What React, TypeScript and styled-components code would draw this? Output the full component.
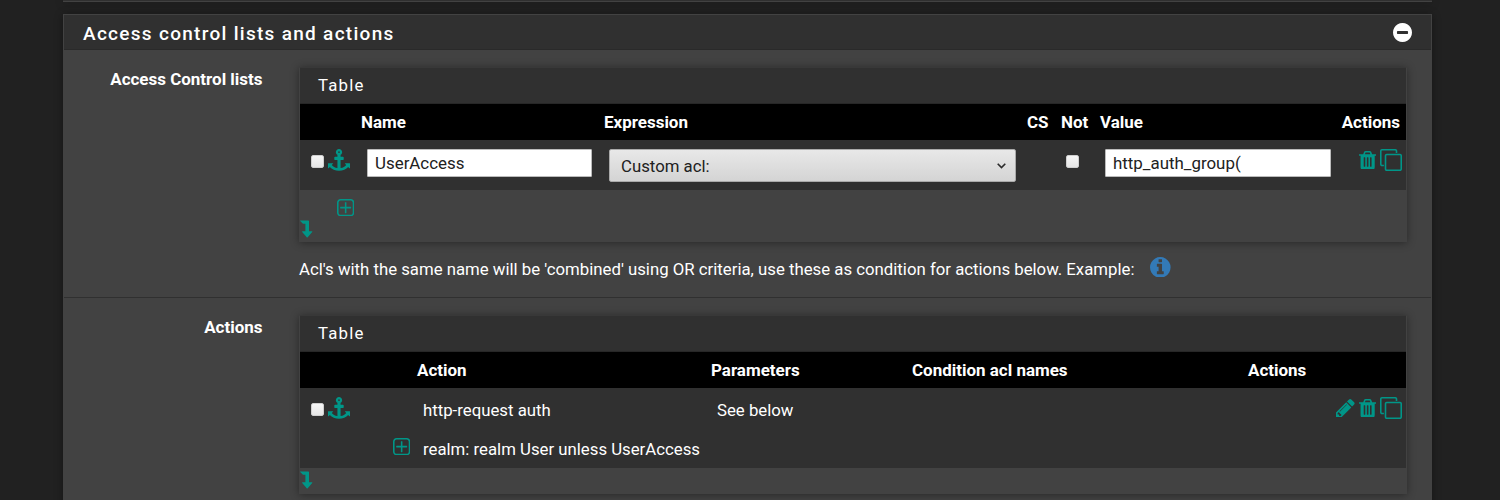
import React from "react";
import styled, { createGlobalStyle } from "styled-components";

const GlobalStyle = createGlobalStyle`
  * { box-sizing: border-box; }
  body {
    margin: 0;
    background: #212121;
    color: #fff;
    font: 400 16.78px/22px Roboto, sans-serif;
  }
`;

const Viewport = styled.div`
  width: 1500px;
  height: 500px;
  overflow: hidden;
  display: flex;
  flex-direction: column;
  align-items: center;
  gap: 12px;
  padding-right: 5px;
`;

const PreviousPanel = styled.div`
  flex: none;
  width: 1369px;
  height: 2px;
  background: #303030;
  border-bottom: 1px solid #424242;
  box-shadow: 0 1px 8px rgba(0, 0, 0, 0.4);
`;

const Panel = styled.section`
  flex: none;
  width: 1369px;
  height: 540px;
  background: #424242;
  border: 1px solid #424242;
  box-shadow: 0 1px 8px rgba(0, 0, 0, 0.4);
`;

const PanelHeading = styled.header`
  display: flex;
  align-items: center;
  justify-content: space-between;
  height: 35px;
  padding: 3px 19px 0 19px;
  background: #303030;
  border-bottom: 1px solid #2a2a2a;
`;

const PanelTitle = styled.h2`
  margin: 0;
  font-size: 19px;
  font-weight: 500;
  letter-spacing: 1.29px;
  line-height: 24px;
`;

const FormRow = styled.div<{ $height: number }>`
  display: flex;
  height: ${(p) => p.$height}px;
  padding-top: 17px;
  border-bottom: 1px solid #303030;
`;

const Label = styled.div`
  width: 198.5px;
  margin-right: 36.5px;
  padding-top: 1px;
  text-align: right;
  font-size: 16.98px;
  font-weight: 700;
`;

const Content = styled.div`
  width: 1108px;
`;

const TablePanel = styled.div`
  width: 1108px;
  border: 1px solid #424242;
  border-top-color: #383838;
  background: #424242;
  box-shadow: 0 1px 8px rgba(0, 0, 0, 0.4);
`;

const TableHeading = styled.div`
  height: 36px;
  padding: 6px 18px 0;
  background: #303030;
  border-bottom: 1px solid #272727;
  letter-spacing: 1.2px;
`;

const HeaderRow = styled.div<{ $columns: string }>`
  display: grid;
  grid-template-columns: ${(p) => p.$columns};
  height: 36px;
  padding-top: 7px;
  background: #000;
  font-size: 16.98px;
  font-weight: 700;
`;

const HeaderCell = styled.div<{ $end?: boolean }>`
  padding: 0 6px;
  white-space: nowrap;
  text-align: ${(p) => (p.$end ? "right" : "left")};
`;

const BodyRow = styled.div<{ $columns: string; $height: number }>`
  display: grid;
  grid-template-columns: ${(p) => p.$columns};
  height: ${(p) => p.$height}px;
  background: #303030;
`;

const Cell = styled.div<{ $top?: number; $left?: number }>`
  padding: ${(p) => p.$top ?? 9}px 0 0 ${(p) => p.$left ?? 12}px;
  white-space: nowrap;
`;

const IconCell = styled(Cell)`
  display: flex;
  align-items: flex-start;
  gap: 4px;
`;

const ActionCell = styled.div`
  display: flex;
  align-items: center;
  justify-content: flex-end;
  gap: 4px;
  height: 22px;
  margin-top: 9px;
  padding-right: 4px;
`;

const Checkbox = styled.input.attrs({ type: "checkbox" })`
  appearance: none;
  flex: none;
  display: block;
  width: 13px;
  height: 13px;
  margin: 6px 0 0;
  border: 1px solid #cfcfcf;
  border-radius: 2px;
  background: linear-gradient(#f6f6f6, #e6e6e6);
`;

const TextInput = styled.input<{ $width: number }>`
  display: block;
  width: ${(p) => p.$width}px;
  height: 28px;
  padding: 0 7px 1px;
  border: 1px solid #bbb;
  border-radius: 1px;
  background: #fff;
  color: #212121;
  font: 400 16.9px Roboto, sans-serif;
`;

const SelectBox = styled.div`
  display: flex;
  align-items: center;
  justify-content: space-between;
  width: 407px;
  height: 33px;
  padding: 1px 9px 0 11px;
  border: 1px solid #aaa;
  border-radius: 2px;
  background: linear-gradient(#e8e8e8, #d4d4d4);
  color: #212121;
`;

const Footer = styled.div<{ $height: number }>`
  display: flex;
  flex-direction: column;
  align-items: flex-start;
  height: ${(p) => p.$height}px;
`;

const AddButton = styled.div`
  height: 30px;
  padding: 9px 0 0 37px;
`;

const EndMarker = styled.div<{ $top: number }>`
  padding-top: ${(p) => p.$top}px;
`;

const HelpText = styled.p`
  display: flex;
  gap: 16px;
  margin: 14px 0 0;
  padding-top: 2px;
  white-space: nowrap;
`;

const Icon = styled.svg`
  display: block;
  flex: none;
  fill: #009688;
`;

const InfoIcon = styled(Icon)`
  margin-top: -1.5px;
  fill: #337ab7;
`;

const ToggleIcon = styled(Icon)`
  margin-top: -3px;
  fill: #fff;
`;

const Anchor = () => (
  <Icon width="22" height="22" viewBox="0 0 1792 1792">
    <path d="M960 256q0-26-19-45t-45-19-45 19-19 45 19 45 45 19 45-19 19-45zm832 928v352q0 22-20 30-8 2-12 2-12 0-23-9l-93-93q-119 143-318.5 226.5t-429.5 83.5-429.5-83.5-318.5-226.5l-93 93q-9 9-23 9-4 0-12-2-20-8-20-30v-352q0-14 9-23t23-9h352q22 0 30 20 8 19-7 35l-100 100q67 91 189.5 153.5t271.5 82.5v-647h-192q-26 0-45-19t-19-45v-128q0-26 19-45t45-19h192v-163q-58-34-93-92.5t-35-128.5q0-106 75-181t181-75 181 75 75 181q0 70-35 128.5t-93 92.5v163h192q26 0 45 19t19 45v128q0 26-19 45t-45 19h-192v647q149-20 271.5-82.5t189.5-153.5l-100-100q-15-16-7-35 8-20 30-20h352q14 0 23 9t9 23z" />
  </Icon>
);

const Trash = () => (
  <Icon width="17.3" height="18.9" viewBox="192 128 1408 1536">
    <path d="M704 1376v-704q0-14-9-23t-23-9h-64q-14 0-23 9t-9 23v704q0 14 9 23t23 9h64q14 0 23-9t9-23zm256 0v-704q0-14-9-23t-23-9h-64q-14 0-23 9t-9 23v704q0 14 9 23t23 9h64q14 0 23-9t9-23zm256 0v-704q0-14-9-23t-23-9h-64q-14 0-23 9t-9 23v704q0 14 9 23t23 9h64q14 0 23-9t9-23zm-544-992h448l-48-117q-7-9-17-11h-317q-10 2-17 11zm928 32v64q0 14-9 23t-23 9h-96v948q0 83-47 143.5t-113 60.5h-832q-66 0-113-58.5t-47-141.5v-952h-96q-14 0-23-9t-9-23v-64q0-14 9-23t23-9h309l70-167q15-37 54-63t79-26h320q40 0 79 26t54 63l70 167h309q14 0 23 9t9 23z" />
  </Icon>
);

const Pencil = () => (
  <Icon width="18.6" height="18.6" viewBox="128 149 1515 1515">
    <path d="M491 1536l91-91-235-235-91 91v107h128v128h107zm523-928q0-22-22-22-10 0-17 7l-542 542q-7 7-7 17 0 22 22 22 10 0 17-7l542-542q7-7 7-17zm-54-192l416 416-832 832h-416v-416zm683 96q0 53-37 90l-166 166-416-416 166-165q36-38 90-38 53 0 91 38l235 234q37 39 37 91z" />
  </Icon>
);

const Clone = () => (
  <Icon width="22" height="22" viewBox="0 0 1792 1792">
    <path d="M1664 1632v-1088q0-13-9.5-22.5t-22.5-9.5h-1088q-13 0-22.5 9.5t-9.5 22.5v1088q0 13 9.5 22.5t22.5 9.5h1088q13 0 22.5-9.5t9.5-22.5zm128-1088v1088q0 66-47 113t-113 47h-1088q-66 0-113-47t-47-113v-1088q0-66 47-113t113-47h1088q66 0 113 47t47 113zm-384-384v160h-128v-160q0-13-9.5-22.5t-22.5-9.5h-1088q-13 0-22.5 9.5t-9.5 22.5v1088q0 13 9.5 22.5t22.5 9.5h160v128h-160q-66 0-113-47t-47-113v-1088q0-66 47-113t113-47h1088q66 0 113 47t47 113z" />
  </Icon>
);

const PlusSquare = () => (
  <Icon width="17.3" height="17.3" viewBox="192 128 1408 1408">
    <path d="M1344 800v64q0 14-9 23t-23 9h-352v352q0 14-9 23t-23 9h-64q-14 0-23-9t-9-23v-352h-352q-14 0-23-9t-9-23v-64q0-14 9-23t23-9h352v-352q0-14 9-23t23-9h64q14 0 23 9t9 23v352h352q14 0 23 9t9 23zm128 448v-832q0-66-47-113t-113-47h-832q-66 0-113 47t-47 113v832q0 66 47 113t113 47h832q66 0 113-47t47-113zm128-832v832q0 119-84.5 203.5t-203.5 84.5h-832q-119 0-203.5-84.5t-84.5-203.5v-832q0-119 84.5-203.5t203.5-84.5h832q119 0 203.5 84.5t84.5 203.5z" />
  </Icon>
);

const LevelDown = () => (
  <Icon width="13" height="18" viewBox="0 0 13 18">
    <path d="M.2.9Q-.2.4.4.4H8.400q.6 0 .6.6V11.300h2.900q.7 0 .3.6L7.700 17.200q-.5.5-1 0L2.200 11.900q-.4-.6.300-.6H5.400V3.800H3.200q-.3 0-.5-.2z" />
  </Icon>
);

const Info = () => (
  <InfoIcon width="20.6" height="20.6" viewBox="128 128 1536 1536">
    <path d="M1152 1376v-160q0-14-9-23t-23-9h-96v-512q0-14-9-23t-23-9h-320q-14 0-23 9t-9 23v160q0 14 9 23t23 9h96v320h-96q-14 0-23 9t-9 23v160q0 14 9 23t23 9h448q14 0 23-9t9-23zm-128-896v-160q0-14-9-23t-23-9h-192q-14 0-23 9t-9 23v160q0 14 9 23t23 9h192q14 0 23-9t9-23zm640 416q0 209-103 385.5t-279.5 279.500-385.5 103-385.5-103-279.5-279.5-103-385.5 103-385.5 279.5-279.5 385.5-103 385.5 103 279.5 279.5 103 385.5z" />
  </InfoIcon>
);

const Collapse = () => (
  <ToggleIcon width="19" height="19" viewBox="128 128 1536 1536">
    <path d="M1344 960v-128q0-26-19-45t-45-19h-768q-26 0-45 19t-19 45v128q0 26 19 45t45 19h768q26 0 45-19t19-45zm320-64q0 209-103 385.5t-279.5 279.500-385.5 103-385.5-103-279.5-279.5-103-385.5 103-385.5 279.5-279.5 385.5-103 385.5 103 279.5 279.5 103 385.5z" />
  </ToggleIcon>
);

const Chevron = () => (
  <svg width="9" height="6" viewBox="0 0 9 6" fill="none" stroke="#2b2b2b" strokeWidth="1.6">
    <path d="M.7.8l3.800 3.800L8.300.8" />
  </svg>
);

const ACL_COLUMNS = "55px 243px 423px 34px 39px 1fr 72px";
const ACTION_COLUMNS = "111px 294px 201px 336px 1fr";

export default function App() {
  return (
    <>
      <GlobalStyle />
      <Viewport>
        <PreviousPanel />
        <Panel>
          <PanelHeading>
            <PanelTitle>Access control lists and actions</PanelTitle>
            <Collapse />
          </PanelHeading>

          <FormRow $height={248}>
            <Label>Access Control lists</Label>
            <Content>
              <TablePanel>
                <TableHeading>Table</TableHeading>
                <HeaderRow $columns={ACL_COLUMNS}>
                  <span />
                  <HeaderCell>Name</HeaderCell>
                  <HeaderCell>Expression</HeaderCell>
                  <HeaderCell>CS</HeaderCell>
                  <HeaderCell>Not</HeaderCell>
                  <HeaderCell>Value</HeaderCell>
                  <HeaderCell $end>Actions</HeaderCell>
                </HeaderRow>
                <BodyRow $columns={ACL_COLUMNS} $height={50}>
                  <IconCell $left={11.4}>
                    <Checkbox />
                    <Anchor />
                  </IconCell>
                  <Cell>
                    <TextInput $width={225} defaultValue="UserAccess" />
                  </Cell>
                  <Cell $left={11}>
                    <SelectBox>
                      <span>Custom acl:</span>
                      <Chevron />
                    </SelectBox>
                  </Cell>
                  <span />
                  <Cell $left={11}>
                    <Checkbox />
                  </Cell>
                  <Cell $left={11}>
                    <TextInput $width={226} defaultValue="http_auth_group(" />
                  </Cell>
                  <ActionCell>
                    <Trash />
                    <Clone />
                  </ActionCell>
                </BodyRow>
                <Footer $height={51}>
                  <AddButton>
                    <PlusSquare />
                  </AddButton>
                  <EndMarker $top={0}>
                    <LevelDown />
                  </EndMarker>
                </Footer>
              </TablePanel>
              <HelpText>
                <span>
                  Acl's with the same name will be 'combined' using OR criteria, use these as
                  condition for actions below. Example:
                </span>
                <Info />
              </HelpText>
            </Content>
          </FormRow>

          <FormRow $height={260}>
            <Label>Actions</Label>
            <Content>
              <TablePanel>
                <TableHeading>Table</TableHeading>
                <HeaderRow $columns={ACTION_COLUMNS}>
                  <span />
                  <HeaderCell>Action</HeaderCell>
                  <HeaderCell>Parameters</HeaderCell>
                  <HeaderCell>Condition acl names</HeaderCell>
                  <HeaderCell>Actions</HeaderCell>
                </HeaderRow>
                <BodyRow $columns={ACTION_COLUMNS} $height={42}>
                  <IconCell $left={11.4}>
                    <Checkbox />
                    <Anchor />
                  </IconCell>
                  <Cell $top={11}>http-request auth</Cell>
                  <Cell $top={11}>See below</Cell>
                  <span />
                  <ActionCell>
                    <Pencil />
                    <Trash />
                    <Clone />
                  </ActionCell>
                </BodyRow>
                <BodyRow $columns="111px 1fr" $height={38}>
                  <Cell $left={93} $top={8}>
                    <PlusSquare />
                  </Cell>
                  <Cell $top={8}>realm: realm User unless UserAccess</Cell>
                </BodyRow>
                <Footer $height={25}>
                  <EndMarker $top={2.5}>
                    <LevelDown />
                  </EndMarker>
                </Footer>
              </TablePanel>
            </Content>
          </FormRow>
        </Panel>
      </Viewport>
    </>
  );
}
